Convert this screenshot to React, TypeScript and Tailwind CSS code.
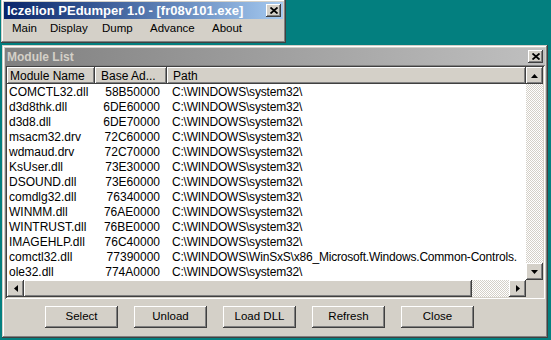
import React from "react"

const winRaised =
  "shadow-[inset_-1px_-1px_#404040,inset_1px_1px_#d4d0c8,inset_-2px_-2px_#808080,inset_2px_2px_#ffffff]"
const btnRaised =
  "shadow-[inset_-1px_-1px_#404040,inset_1px_1px_#ffffff,inset_-2px_-2px_#808080,inset_2px_2px_#d4d0c8]"
const hdrRaised = "shadow-[inset_-1px_-1px_#404040,inset_1px_1px_#ffffff,inset_-2px_-2px_#808080]"
const sunken =
  "shadow-[inset_1px_1px_#808080,inset_-1px_-1px_#ffffff,inset_2px_2px_#404040,inset_-2px_-2px_#d4d0c8]"
const dither = "bg-[image:repeating-conic-gradient(#ffffff_0_25%,#d4d0c8_0_50%)] bg-[length:2px_2px]"

const MODULES: [string, string, string][] = [
  ["COMCTL32.dll", "58B50000", "C:\\WINDOWS\\system32\\"],
  ["d3d8thk.dll", "6DE60000", "C:\\WINDOWS\\system32\\"],
  ["d3d8.dll", "6DE70000", "C:\\WINDOWS\\system32\\"],
  ["msacm32.drv", "72C60000", "C:\\WINDOWS\\system32\\"],
  ["wdmaud.drv", "72C70000", "C:\\WINDOWS\\system32\\"],
  ["KsUser.dll", "73E30000", "C:\\WINDOWS\\system32\\"],
  ["DSOUND.dll", "73E60000", "C:\\WINDOWS\\system32\\"],
  ["comdlg32.dll", "76340000", "C:\\WINDOWS\\system32\\"],
  ["WINMM.dll", "76AE0000", "C:\\WINDOWS\\system32\\"],
  ["WINTRUST.dll", "76BE0000", "C:\\WINDOWS\\system32\\"],
  ["IMAGEHLP.dll", "76C40000", "C:\\WINDOWS\\system32\\"],
  ["comctl32.dll", "77390000", "C:\\WINDOWS\\WinSxS\\x86_Microsoft.Windows.Common-Controls."],
  ["ole32.dll", "774A0000", "C:\\WINDOWS\\system32\\"],
]

const MENU = [
  { label: "Main", w: "w-[38px]" },
  { label: "Display", w: "w-[52px]" },
  { label: "Dump", w: "w-[48px]" },
  { label: "Advance", w: "w-[62px]" },
  { label: "About", w: "w-[50px]" },
]

function CloseBox() {
  return (
    <div className={`w-[15px] h-[13px] bg-[#d4d0c8] flex items-center justify-center ${btnRaised}`}>
      <svg width="8" height="7" viewBox="0 0 8 7">
        <path d="M0.5 0.5 L7.5 6.5 M7.5 0.5 L0.5 6.5" stroke="#000" strokeWidth="1.8" />
      </svg>
    </div>
  )
}

function Arrow({ dir }: { dir: "up" | "down" | "left" | "right" }) {
  const pts = {
    up: "3.5,0 0,4 7,4",
    down: "0,0 7,0 3.5,4",
    left: "4,0 4,7 0,3.5",
    right: "0,0 0,7 4,3.5",
  }[dir]
  const vertical = dir === "up" || dir === "down"
  return (
    <div className={`w-[17px] h-[17px] shrink-0 bg-[#d4d0c8] flex items-center justify-center ${btnRaised}`}>
      <svg width={vertical ? 7 : 4} height={vertical ? 4 : 7} viewBox={vertical ? "0 0 7 4" : "0 0 4 7"}>
        <polygon points={pts} fill="#000" />
      </svg>
    </div>
  )
}

export default function App() {
  return (
    <div className="w-[551px] h-[340px] bg-[#037f7f] overflow-hidden font-['Liberation_Sans',Arial,sans-serif] text-black">
      <div className="flex flex-col items-start">
        {/* main window */}
        <div className={`ml-[1px] -mt-[1px] w-[285px] h-[44px] bg-[#d4d0c8] p-[3px] ${winRaised}`}>
          <div className="h-[17px] flex items-center bg-gradient-to-r from-[#0a246a] to-[#a6caf0] pl-[3px] pr-[2px]">
            <span className="text-white font-bold text-[13px] leading-none whitespace-nowrap">
              Iczelion PEdumper 1.0 - [fr08v101.exe]
            </span>
            <div className="ml-auto">
              <CloseBox />
            </div>
          </div>
          <div className="h-[20px] flex items-center pl-[8px] text-[11.5px]">
            {MENU.map((m) => (
              <span key={m.label} className={`${m.w} whitespace-nowrap`}>
                {m.label}
              </span>
            ))}
          </div>
        </div>

        {/* module list window */}
        <div className={`ml-[2px] mt-[2px] w-[546px] h-[293px] bg-[#d4d0c8] p-[3px] flex flex-col ${winRaised}`}>
          <div className="h-[17px] shrink-0 flex items-center bg-gradient-to-r from-[#808080] to-[#c0c0c0] pl-[2px] pr-[2px]">
            <span className="text-[#d4d0c8] font-bold text-[12px] leading-none">Module List</span>
            <div className="ml-auto">
              <CloseBox />
            </div>
          </div>

          <div className={`h-[234px] shrink-0 bg-white p-[2px] ${sunken}`}>
            <div className="h-full grid grid-cols-[1fr_17px] grid-rows-[1fr_17px]">
              <div className="overflow-hidden text-[12px] leading-none">
                <div className="flex h-[17px] bg-[#d4d0c8]">
                  <div className={`w-[88px] shrink-0 flex items-center pl-[3px] ${hdrRaised}`}>Module Name</div>
                  <div className={`w-[72px] shrink-0 flex items-center pl-[6px] ${hdrRaised}`}>Base Ad...</div>
                  <div className={`flex-1 flex items-center pl-[6px] ${hdrRaised}`}>Path</div>
                </div>
                {MODULES.map(([name, base, path]) => (
                  <div key={name} className="flex h-[15px] items-center whitespace-nowrap">
                    <div className="w-[88px] shrink-0 pl-[2px]">{name}</div>
                    <div className="w-[72px] shrink-0 text-right pr-[7px]">{base}</div>
                    <div className="pl-[5px] tracking-[-0.2px]">{path}</div>
                  </div>
                ))}
              </div>

              <div className="flex flex-col bg-[#d4d0c8]">
                <Arrow dir="up" />
                <div className={`flex-1 ${dither}`} />
                <Arrow dir="down" />
              </div>

              <div className="flex bg-[#d4d0c8]">
                <Arrow dir="left" />
                <div className={`w-[448px] shrink-0 bg-[#d4d0c8] ${btnRaised}`} />
                <div className={`flex-1 ${dither}`} />
                <Arrow dir="right" />
              </div>
              <div className="bg-[#d4d0c8]" />
            </div>
          </div>

          <div className="flex gap-[16px] pl-[40px] pt-[7px]">
            {["Select", "Unload", "Load DLL", "Refresh", "Close"].map((b) => (
              <div
                key={b}
                className={`w-[73px] h-[22px] bg-[#d4d0c8] flex items-center justify-center text-[11.5px] ${btnRaised}`}
              >
                {b}
              </div>
            ))}
          </div>
        </div>
      </div>
    </div>
  )
}
